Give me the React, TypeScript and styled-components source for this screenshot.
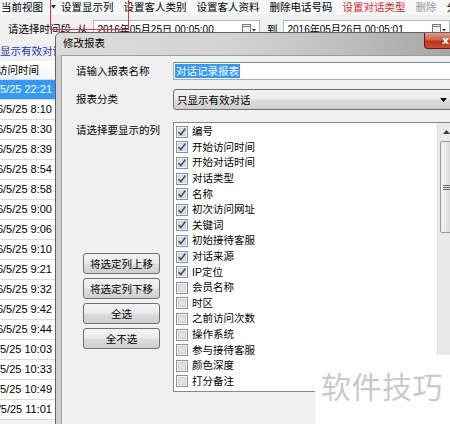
import React from "react";
import styled, { createGlobalStyle } from "styled-components";

const GlobalStyle = createGlobalStyle`
  html, body {
    margin: 0;
    padding: 0;
    background: #ffffff;
    overflow: hidden;
  }
  body {
    font-family: "Liberation Sans", "Noto Sans CJK SC", sans-serif;
    font-size: 10.5px;
    color: #000;
  }
`;

const Screen = styled.div`
  position: relative;
  width: 450px;
  height: 424px;
  overflow: hidden;
  background: #f0f0f0;
`;

/* ---------- background window ---------- */

const MenuBar = styled.div`
  display: flex;
  align-items: center;
  gap: 10px;
  height: 14px;
  padding: 0 0 1px 1px;
  background: #f7f8f9;
  white-space: nowrap;
  line-height: 13px;
`;

const MenuItem = styled.span<{ $tone?: "alert" | "muted" }>`
  color: ${({ $tone }) => ($tone === "alert" ? "#e0242c" : $tone === "muted" ? "#9a9a9a" : "#000")};
`;

const MenuCaret = styled.span`
  display: flex;
  margin: 0 -5px 0 -2px;
`;

const FilterBar = styled.div`
  display: flex;
  align-items: center;
  height: 27px;
  padding-top: 1px;
  box-sizing: border-box;
  white-space: nowrap;
  line-height: 13px;
`;

const Caption = styled.span<{ $indent?: number }>`
  margin-left: ${({ $indent }) => $indent ?? 0}px;
`;

const DateField = styled.div<{ $width: number }>`
  display: flex;
  align-items: center;
  justify-content: space-between;
  width: ${({ $width }) => $width}px;
  height: 18px;
  box-sizing: border-box;
  margin-left: 5px;
  padding: 0 3px 0 4px;
  background: #fff;
  border: 1px solid #b5b8be;
  font-size: 10px;
`;

const LinkRow = styled.div`
  height: 19px;
  line-height: 19px;
  color: #2233cc;
  white-space: nowrap;
`;

const Grid = styled.div`
  width: 55px;
  background: #fff;
  border-right: 1px solid #c8c8c8;
`;

const GridHeader = styled.div`
  height: 19px;
  line-height: 19px;
  text-indent: -3px;
  overflow: hidden;
  white-space: nowrap;
  border-bottom: 1px solid #d8d8d8;
  box-sizing: border-box;
  background: linear-gradient(#ffffff, #f3f3f3);
`;

const GridRow = styled.div<{ $selected?: boolean }>`
  display: flex;
  justify-content: flex-end;
  height: 20px;
  line-height: 19px;
  padding-right: 3px;
  box-sizing: border-box;
  overflow: hidden;
  white-space: nowrap;
  font-size: 11px;
  border-bottom: 1px solid #dcdcdc;
  background: ${({ $selected }) => ($selected ? "#3399ff" : "#fff")};
  color: ${({ $selected }) => ($selected ? "#fff" : "#000")};
`;

const Annotation = styled.div`
  position: absolute;
  left: 50px;
  top: -2px;
  width: 77px;
  height: 31px;
  border: 1.5px solid #e3343c;
  border-top: none;
  pointer-events: none;
`;

/* ---------- dialog ---------- */

const Dialog = styled.div`
  position: absolute;
  left: 55px;
  top: 32px;
  width: 418px;
  height: 410px;
  display: flex;
  flex-direction: column;
  box-sizing: border-box;
  border: 1px solid #616161;
  border-radius: 6px 6px 0 0;
  background: linear-gradient(to right, #cfcfcf, #c4c4c4 60%, #a9a9a9);
  overflow: hidden;
`;

const TitleBar = styled.div`
  display: flex;
  align-items: flex-start;
  height: 22px;
  padding-left: 7px;
  background: linear-gradient(to right, #dcdcdc 0%, #d2d2d2 45%, #bdbdbd 70%, #a0a0a0 100%);
`;

const Title = styled.span`
  margin-top: 4px;
  line-height: 13px;
`;

const CloseButton = styled.div`
  margin-left: auto;
  margin-right: 5px;
  width: 43px;
  height: 16px;
  display: flex;
  align-items: center;
  justify-content: center;
  box-sizing: border-box;
  border: 1px solid #5a2418;
  border-top: none;
  border-radius: 0 0 4px 4px;
  background: linear-gradient(#e39a88 0%, #cf5f48 45%, #b8321b 55%, #cf4e33 100%);
  color: #fff;
  font-weight: bold;
  font-size: 11px;
  line-height: 11px;
  font-family: "DejaVu Sans", sans-serif;
`;

const Frame = styled.div`
  flex: 1;
  display: flex;
  padding: 0 6px;
`;

const Client = styled.div`
  flex: 1;
  display: flex;
  flex-direction: column;
  gap: 9px;
  padding: 6px 11px 0 14px;
  background: #f0f0f0;
  border-top: 1px solid #9c9c9c;
  border-left: 1px solid #9c9c9c;
  margin-left: -1px;
`;

const FormRow = styled.div<{ $top?: number }>`
  display: flex;
  align-items: ${({ $top }) => ($top !== undefined ? "flex-start" : "center")};
  margin-top: ${({ $top }) => $top ?? 0}px;
`;

const Label = styled.span`
  width: 97px;
  flex-shrink: 0;
  line-height: 13px;
  white-space: nowrap;
`;

const NameInput = styled.div`
  flex: 1;
  height: 18px;
  display: flex;
  align-items: center;
  box-sizing: border-box;
  padding-left: 1px;
  background: #fff;
  border: 1px solid #abadb3;
  border-top-color: #7f8591;
`;

const Highlight = styled.span`
  padding: 1px;
  line-height: 12px;
  background: #3399ff;
  color: #fff;
`;

const SelectBox = styled.div`
  flex: 1;
  height: 21px;
  display: flex;
  align-items: center;
  justify-content: space-between;
  box-sizing: border-box;
  padding: 0 7px 0 3px;
  border: 1px solid #707070;
  border-radius: 3px;
  background: linear-gradient(#f2f2f2 0%, #ebebeb 48%, #dddddd 52%, #cfcfcf 100%);
`;

const SideColumn = styled.div`
  width: 97px;
  flex-shrink: 0;
  display: flex;
  flex-direction: column;
  padding-top: 2px;
`;

const ButtonStack = styled.div`
  display: flex;
  flex-direction: column;
  gap: 4px;
  margin: 116px 0 0 7px;
`;

const Button = styled.div`
  width: 77px;
  height: 21px;
  display: flex;
  align-items: center;
  justify-content: center;
  box-sizing: border-box;
  border: 1px solid #707070;
  border-radius: 3px;
  background: linear-gradient(#f2f2f2 0%, #ebebeb 48%, #dddddd 52%, #cfcfcf 100%);
  white-space: nowrap;
`;

const ListBox = styled.div`
  flex: 1;
  height: 270px;
  display: flex;
  box-sizing: border-box;
  background: #fff;
  border: 1px solid #828790;
`;

const Items = styled.div`
  flex: 1;
  padding: 1px 0 0 2px;
`;

const Item = styled.div`
  display: flex;
  align-items: center;
  gap: 4px;
  height: 15.6px;
  line-height: 13px;
  white-space: nowrap;
`;

const ScrollBar = styled.div`
  width: 16px;
  display: flex;
  flex-direction: column;
  align-items: center;
  background: #e9e9e9;
  border-left: 1px solid #e2e2e2;
`;

const ScrollArrow = styled.div`
  height: 17px;
  display: flex;
  align-items: center;
  justify-content: center;
`;

const Thumb = styled.div`
  width: 13px;
  height: 92px;
  margin-top: 1px;
  display: flex;
  align-items: center;
  justify-content: center;
  box-sizing: border-box;
  border: 1px solid #979797;
  border-radius: 2px;
  background: linear-gradient(to right, #f5f5f5, #e6e6e6 50%, #d6d6d6);
`;

const Watermark = styled.div`
  position: absolute;
  left: 315px;
  top: 355px;
  width: 135px;
  height: 69px;
  box-sizing: border-box;
  padding: 12px 0 0 6px;
  background: #fff;
  color: #c9c9c9;
  font-family: "Noto Sans CJK SC", sans-serif;
  font-size: 30px;
  line-height: 36px;
  white-space: nowrap;
  letter-spacing: 0.5px;
`;

/* ---------- drawings ---------- */

const CaretIcon = () => (
  <svg width="5" height="4" viewBox="0 0 5 4">
    <path d="M0 0 L5 0 L2.5 3.5 Z" fill="#222" />
  </svg>
);

const CalendarIcon = () => (
  <svg width="14" height="10" viewBox="0 0 14 10">
    <rect x="0.5" y="0.5" width="8" height="8" fill="#f4f4f4" stroke="#7a7a7a" />
    <line x1="1" y1="2.5" x2="8" y2="2.5" stroke="#7a7a7a" />
    <path d="M10 5 L14 5 L12 7.5 Z" fill="#333" />
  </svg>
);

const DropArrow = () => (
  <svg width="7" height="4" viewBox="0 0 7 4">
    <path d="M0 0 L7 0 L3.5 4 Z" fill="#000" />
  </svg>
);

const UpArrow = () => (
  <svg width="7" height="4" viewBox="0 0 7 4">
    <path d="M0 4 L7 4 L3.5 0 Z" fill="#3a3a3a" />
  </svg>
);

const Grip = () => (
  <svg width="7" height="7" viewBox="0 0 7 7">
    <path d="M0 1.5 H7 M0 3.5 H7 M0 5.5 H7" stroke="#6a6a6a" strokeWidth="1" />
  </svg>
);

const CheckBox = ({ checked }: { checked: boolean }) => (
  <svg width="12" height="12" viewBox="0 0 12 12">
    <rect x="0.5" y="0.5" width="11" height="11" fill="#f6f6f6" stroke="#8e8f8f" />
    <rect x="2.5" y="2.5" width="7" height="7" fill="#e2e2e2" stroke="#cfcfcf" />
    {checked && (
      <path d="M2.6 6 L4.9 8.6 L9.4 2.6" fill="none" stroke="#3f4f8c" strokeWidth="1.6" strokeLinejoin="round" />
    )}
  </svg>
);

/* ---------- data ---------- */

const times = [
  "22:21", "8:10", "8:30", "8:39", "8:54", "8:58", "9:00", "9:06", "9:10",
  "9:21", "9:32", "9:42", "9:44", "10:03", "10:33", "10:49", "11:01",
];

const columns: [string, boolean][] = [
  ["编号", true],
  ["开始访问时间", true],
  ["开始对话时间", true],
  ["对话类型", true],
  ["名称", true],
  ["初次访问网址", true],
  ["关键词", true],
  ["初始接待客服", true],
  ["对话来源", true],
  ["IP定位", true],
  ["会员名称", false],
  ["时区", false],
  ["之前访问次数", false],
  ["操作系统", false],
  ["参与接待客服", false],
  ["颜色深度", false],
  ["打分备注", false],
];

const App = () => {
  return (
    <Screen>
      <GlobalStyle />
      <MenuBar>
        <MenuItem>当前视图</MenuItem>
        <MenuCaret>
          <CaretIcon />
        </MenuCaret>
        <MenuItem>设置显示列</MenuItem>
        <MenuItem>设置客人类别</MenuItem>
        <MenuItem>设置客人资料</MenuItem>
        <MenuItem>删除电话号码</MenuItem>
        <MenuItem $tone="alert">设置对话类型</MenuItem>
        <MenuItem $tone="muted">删除</MenuItem>
        <MenuItem>分析</MenuItem>
      </MenuBar>
      <FilterBar>
        <Caption $indent={8}>请选择时间段</Caption>
        <Caption $indent={6}>从</Caption>
        <DateField $width={172}>
          <span>2016年05月25日 00:05:00</span>
          <CalendarIcon />
        </DateField>
        <Caption $indent={7}>到</Caption>
        <DateField $width={172}>
          <span>2016年05月26日 00:05:01</span>
          <CalendarIcon />
        </DateField>
      </FilterBar>
      <LinkRow>显示有效对话</LinkRow>
      <Grid>
        <GridHeader>访问时间</GridHeader>
        {times.map((t, i) => (
          <GridRow key={t} $selected={i === 0}>
            2016/5/25 {t}
          </GridRow>
        ))}
      </Grid>
      <Annotation />

      <Dialog>
        <TitleBar>
          <Title>修改报表</Title>
          <CloseButton>x</CloseButton>
        </TitleBar>
        <Frame>
          <Client>
            <FormRow>
              <Label>请输入报表名称</Label>
              <NameInput>
                <Highlight>对话记录报表</Highlight>
              </NameInput>
            </FormRow>
            <FormRow>
              <Label>报表分类</Label>
              <SelectBox>
                <span>只显示有效对话</span>
                <DropArrow />
              </SelectBox>
            </FormRow>
            <FormRow $top={3}>
              <SideColumn>
                <Label>请选择要显示的列</Label>
                <ButtonStack>
                  <Button>将选定列上移</Button>
                  <Button>将选定列下移</Button>
                  <Button>全选</Button>
                  <Button>全不选</Button>
                </ButtonStack>
              </SideColumn>
              <ListBox>
                <Items>
                  {columns.map(([name, checked]) => (
                    <Item key={name}>
                      <CheckBox checked={checked} />
                      <span>{name}</span>
                    </Item>
                  ))}
                </Items>
                <ScrollBar>
                  <ScrollArrow>
                    <UpArrow />
                  </ScrollArrow>
                  <Thumb>
                    <Grip />
                  </Thumb>
                </ScrollBar>
              </ListBox>
            </FormRow>
          </Client>
        </Frame>
      </Dialog>

      <Watermark>软件技巧</Watermark>
    </Screen>
  );
};

export default App;
